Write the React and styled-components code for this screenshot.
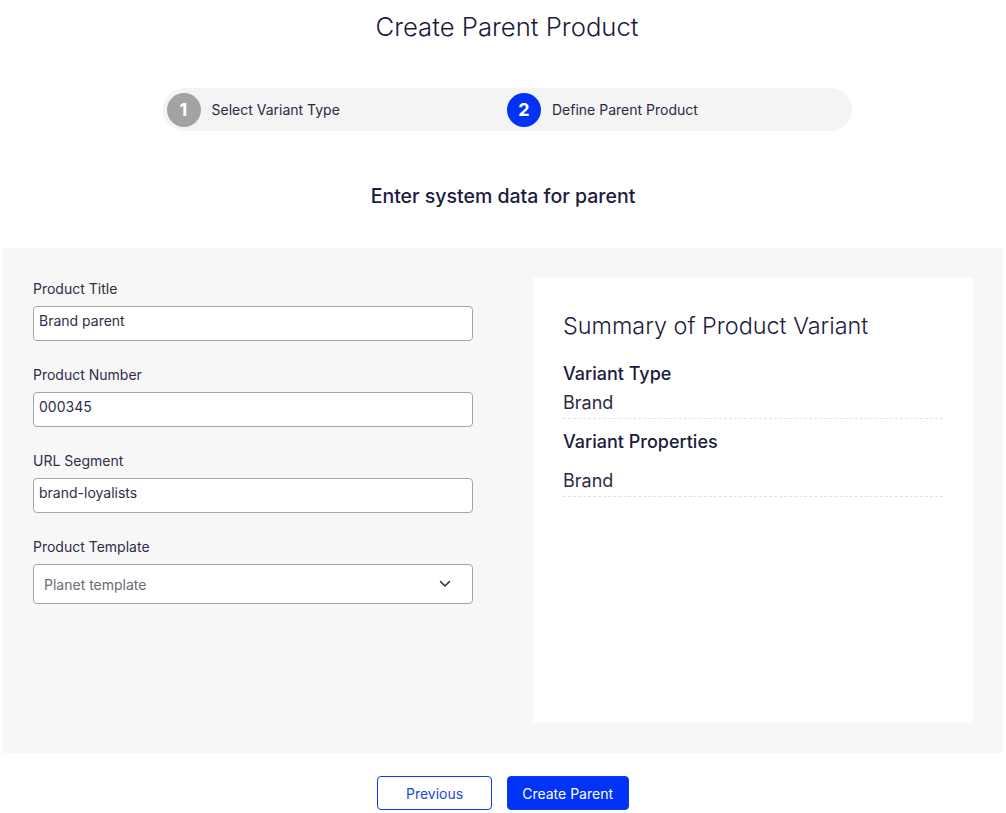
import React from 'react'
import styled, { createGlobalStyle } from 'styled-components'

const GlobalStyle = createGlobalStyle`
    * {
        box-sizing: border-box;
    }
    body {
        margin: 0;
        background: #ffffff;
        font-family: Inter, 'Noto Sans', sans-serif;
        color: #1c1b3d;
    }
`

const Page = styled.div`
    padding: 0 3px;
    display: flex;
    flex-direction: column;
    align-items: center;
`

const Header = styled.div`
    padding-left: 8px;
    display: flex;
    flex-direction: column;
    align-items: center;
`

const Title = styled.h1`
    margin: 10px 0 0;
    font-size: 25.7px;
    line-height: 34px;
    font-weight: 300;
    color: #1c1b3d;
`

const Stepper = styled.div`
    margin-top: 44px;
    width: 689px;
    height: 43px;
    padding: 0 4px;
    border-radius: 22px;
    background: #f4f4f4;
    display: grid;
    grid-template-columns: 1fr 1fr;
    align-items: center;
`

const Step = styled.div`
    display: flex;
    align-items: center;
    gap: 11px;
    font-size: 14px;
    color: #2b2a45;
`

const StepNumber = styled.span`
    width: 34px;
    height: 34px;
    border-radius: 50%;
    background: ${(p) => (p.active ? '#0033f5' : '#a3a3a3')};
    color: #ffffff;
    font-size: 18px;
    font-weight: 700;
    display: flex;
    align-items: center;
    justify-content: center;
`

const Subtitle = styled.h2`
    margin: 51px 0 0;
    font-size: 19.5px;
    line-height: 28px;
    font-weight: 500;
    color: #1c1b3d;
`

const Panel = styled.div`
    margin-top: 38px;
    width: 100%;
    height: 505px;
    background: #f7f7f7;
    padding: 30px;
    display: grid;
    grid-template-columns: 440px 440px;
    column-gap: 60px;
`

const Form = styled.div`
    display: flex;
    flex-direction: column;
`

const Field = styled.div`
    display: flex;
    flex-direction: column;
    margin-bottom: 23px;
`

const Label = styled.label`
    font-size: 14px;
    line-height: 22px;
    color: #2f2e48;
    margin-bottom: 6px;
`

const Input = styled.input`
    height: 35px;
    width: 100%;
    padding: 0 5px 6px;
    border: 1px solid #a5a5a5;
    border-radius: 4px;
    background: #ffffff;
    font-family: Inter, 'Noto Sans', sans-serif;
    font-size: 14px;
    color: #2f2e48;
    outline: none;
`

const Select = styled.div`
    height: 40px;
    padding: 0 21px 0 10px;
    border: 1px solid #a5a5a5;
    border-radius: 4px;
    background: #ffffff;
    font-size: 14px;
    color: #6b6b78;
    display: flex;
    align-items: center;
    justify-content: space-between;
`

const Card = styled.div`
    background: #ffffff;
    padding: 30px 30px;
    display: flex;
    flex-direction: column;
`

const CardTitle = styled.h3`
    margin: 0 0 18px;
    font-size: 23.4px;
    line-height: 36px;
    font-weight: 300;
    color: #1c1b3d;
`

const SummaryGroup = styled.div`
    display: flex;
    flex-direction: column;
`

const SummaryLabel = styled.div`
    font-size: 18px;
    line-height: 24px;
    font-weight: 500;
    color: #1c1b3d;
`

const SummaryValue = styled.div`
    margin-top: ${(p) => p.gap}px;
    font-size: 18px;
    line-height: 24px;
    color: #2b2a45;
    padding-bottom: 3px;
    border-bottom: 1px dashed #e2e2e2;
    margin-bottom: 11px;
`

const Actions = styled.div`
    margin-top: 23px;
    display: flex;
    gap: 15px;
`

const Button = styled.button`
    height: 34px;
    padding: 0 ${(p) => (p.primary ? 14.5 : 27.5)}px;
    border-radius: 4px;
    border: 1px solid #0a3df2;
    background: ${(p) => (p.primary ? '#0033f5' : '#ffffff')};
    color: ${(p) => (p.primary ? '#ffffff' : '#2347d6')};
    font-family: Inter, 'Noto Sans', sans-serif;
    font-size: 14px;
    cursor: pointer;
`

function Chevron() {
    return (
        <svg width="12" height="8" viewBox="0 0 12 8" fill="none">
            <path
                d="M1.5 1.5 6 6l4.5-4.5"
                stroke="#2b2a45"
                strokeWidth="1.5"
                strokeLinecap="round"
                strokeLinejoin="round"
            />
        </svg>
    )
}

const fields = [
    { label: 'Product Title', value: 'Brand parent' },
    { label: 'Product Number', value: '000345' },
    { label: 'URL Segment', value: 'brand-loyalists' },
]

function App() {
    return (
        <>
            <GlobalStyle />
            <Page>
                <Header>
                    <Title>Create Parent Product</Title>

                    <Stepper>
                        <Step>
                            <StepNumber>1</StepNumber>
                            Select Variant Type
                        </Step>
                        <Step>
                            <StepNumber active>2</StepNumber>
                            Define Parent Product
                        </Step>
                    </Stepper>
                </Header>

                <Subtitle>Enter system data for parent</Subtitle>

                <Panel>
                    <Form>
                        {fields.map((f) => (
                            <Field key={f.label}>
                                <Label>{f.label}</Label>
                                <Input defaultValue={f.value} />
                            </Field>
                        ))}
                        <Field>
                            <Label>Product Template</Label>
                            <Select>
                                Planet template
                                <Chevron />
                            </Select>
                        </Field>
                    </Form>

                    <Card>
                        <CardTitle>Summary of Product Variant</CardTitle>
                        <SummaryGroup>
                            <SummaryLabel>Variant Type</SummaryLabel>
                            <SummaryValue gap={5}>Brand</SummaryValue>
                        </SummaryGroup>
                        <SummaryGroup>
                            <SummaryLabel>Variant Properties</SummaryLabel>
                            <SummaryValue gap={15}>Brand</SummaryValue>
                        </SummaryGroup>
                    </Card>
                </Panel>

                <Actions>
                    <Button>Previous</Button>
                    <Button primary>Create Parent</Button>
                </Actions>
            </Page>
        </>
    )
}

export default App
